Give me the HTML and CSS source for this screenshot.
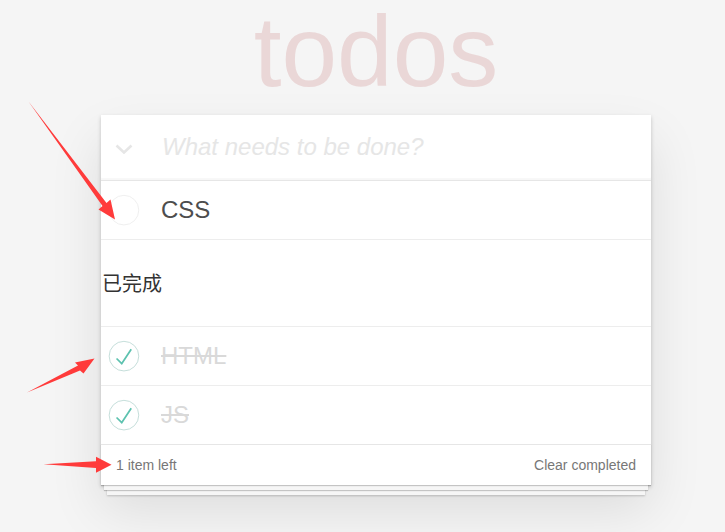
FILE: index.html
```html
<!DOCTYPE html>
<html lang="zh">
<head>
<meta charset="utf-8">
<title>todos</title>
<link rel="stylesheet" href="styles.css">
</head>
<body>
<div class="page">
  <h1 class="title">todos</h1>
  <section class="todoapp">
    <header class="new-row">
      <span class="toggle-all">
        <svg width="18" height="10" viewBox="0 0 18 10"><polyline points="1.5,1.5 9,8.5 16.5,1.5" fill="none" stroke="#e6e6e6" stroke-width="2.6"/></svg>
      </span>
      <div class="new-todo">What needs to be done?</div>
    </header>
    <section class="main">
      <ul class="todo-list">
        <li class="todo">
          <svg class="check" width="40" height="40" viewBox="-10 -18 100 135"><circle cx="50" cy="50" r="50" fill="none" stroke="#ededed" stroke-width="3"/></svg>
          <span class="label">CSS</span>
        </li>
      </ul>
      <div class="group-title">已完成</div>
      <ul class="todo-list">
        <li class="todo done">
          <svg class="check" width="40" height="40" viewBox="-10 -18 100 135"><circle cx="50" cy="50" r="50" fill="none" stroke="#bddad5" stroke-width="3"/><path fill="#5dc2af" d="M72 25L42 71 27 56l-4 4 20 20 34-52z"/></svg>
          <span class="label">HTML</span>
        </li>
        <li class="todo done last">
          <svg class="check" width="40" height="40" viewBox="-10 -18 100 135"><circle cx="50" cy="50" r="50" fill="none" stroke="#bddad5" stroke-width="3"/><path fill="#5dc2af" d="M72 25L42 71 27 56l-4 4 20 20 34-52z"/></svg>
          <span class="label">JS</span>
        </li>
      </ul>
    </section>
    <footer class="footer">
      <span class="count">1 item left</span>
      <span class="clear">Clear completed</span>
    </footer>
  </section>
</div>
<svg class="arrows" width="725" height="532" viewBox="0 0 725 532">
  <polygon fill="#ff3b3b" points="28.5,101.5 106.5,203 110.5,199.5 115,219.5 98.5,209.5 102.5,206"/>
  <polygon fill="#ff3b3b" points="27,392.5 78,365.5 75,362.5 94.5,358.5 83.5,373.5 80,370.5"/>
  <polygon fill="#ff3b3b" points="43.5,464.2 96,461.3 96,456.7 111.5,464.7 96,472.7 96,468.1"/>
</svg>
</body>
</html>
```

FILE: styles.css
```css
html, body {
  margin: 0;
  padding: 0;
}

body {
  background: #f5f5f5;
  font-family: "Liberation Sans", Arial, "Noto Sans CJK SC", sans-serif;
  font-size: 14px;
  color: #4d4d4d;
  width: 725px;
  height: 532px;
  overflow: hidden;
}

.page {
  width: 550px;
  margin-left: 101px;
  padding-top: 1px;
}

.title {
  margin: 0 0 14px 0;
  height: 100px;
  line-height: 100px;
  font-size: 100px;
  font-weight: 400;
  text-align: center;
  color: rgba(175, 47, 47, 0.15);
}

.todoapp {
  background: #fff;
  box-shadow: 0 2px 4px 0 rgba(0, 0, 0, 0.2), 0 25px 50px 0 rgba(0, 0, 0, 0.1);
}

.new-row {
  display: flex;
  align-items: center;
  height: 65px;
  box-shadow: inset 0 -2px 1px rgba(0, 0, 0, 0.03);
}

.toggle-all {
  width: 60px;
  flex: none;
  display: flex;
  padding-left: 14px;
  padding-top: 2px;
  box-sizing: border-box;
}

.new-todo {
  font-size: 24px;
  font-style: italic;
  line-height: 34px;
  color: #e6e6e6;
  padding-left: 1px;
  padding-bottom: 1px;
}

.main {
  border-top: 1px solid #e6e6e6;
}

.todo-list {
  list-style: none;
  margin: 0;
  padding: 0;
}

.todo {
  display: flex;
  align-items: center;
  height: 58px;
  border-bottom: 1px solid #ededed;
}

.todo.last {
  border-bottom: none;
}

.check {
  flex: none;
  display: block;
}

.label {
  padding-left: 20px;
  font-size: 24px;
  line-height: 28px;
  color: #4d4d4d;
}

.done .label {
  color: #d9d9d9;
  text-decoration: line-through;
}

.group-title {
  height: 87px;
  box-sizing: border-box;
  padding-bottom: 2px;
  display: flex;
  align-items: center;
  padding-left: 1px;
  font-family: "Noto Sans CJK SC", sans-serif;
  font-size: 20px;
  color: #333;
  border-bottom: 1px solid #ededed;
}

.footer {
  display: flex;
  justify-content: space-between;
  height: 20px;
  line-height: 20px;
  padding: 10px 15px;
  color: #777;
  border-top: 1px solid #e6e6e6;
  box-shadow: 0 1px 1px rgba(0, 0, 0, 0.2),
              0 8px 0 -3px #f6f6f6,
              0 9px 1px -3px rgba(0, 0, 0, 0.2),
              0 16px 0 -6px #f6f6f6,
              0 17px 2px -6px rgba(0, 0, 0, 0.2);
}

.arrows {
  position: absolute;
  top: 0;
  left: 0;
  pointer-events: none;
}
```
